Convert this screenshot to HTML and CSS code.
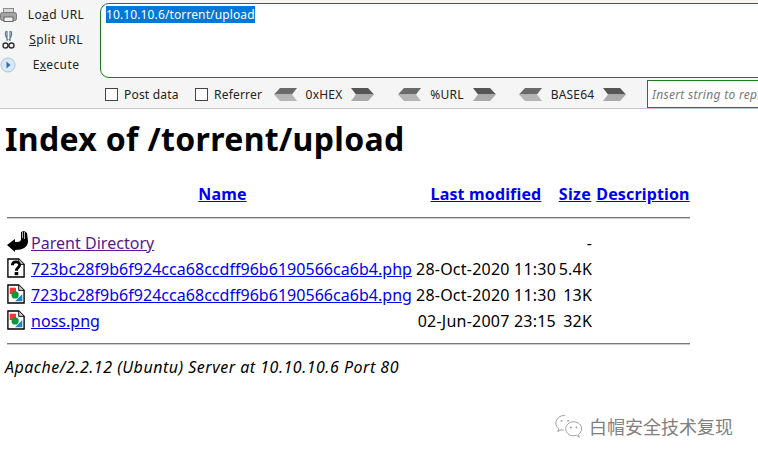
FILE: index.html
```html
<!DOCTYPE html>
<html lang="en">
<head>
    <meta charset="UTF-8">
    <title>Index of /torrent/upload</title>
    <link rel="stylesheet" href="styles.css">
</head>
<body>
    <div class="hackbar">
        <div class="actions">
            <div class="action">
                <svg class="action-icon" width="17" height="16" viewBox="0 0 17 16"><rect x="3.500" y="1.500" width="10" height="5" fill="#d8d8d8" stroke="#8a8a8a"/><rect x="0.500" y="5.500" width="16" height="8" rx="2" fill="#a4a4a4" stroke="#777"/><rect x="4" y="10" width="9" height="4.500" fill="#eee" stroke="#666"/></svg>
                <span class="action-label">Lo<u>a</u>d URL</span>
            </div>
            <div class="action">
                <svg class="action-icon" width="17" height="20" viewBox="0 0 17 20"><path d="M7 1v10M10 1v10M6 1q-2 4 2 9M11 1q2 4-2 9" fill="none" stroke="#5f7f9f" stroke-width="1.2"/><circle cx="5.500" cy="15.500" r="2.500" fill="none" stroke="#333" stroke-width="1.400"/><circle cx="11.500" cy="15.500" r="2.500" fill="none" stroke="#333" stroke-width="1.400"/></svg>
                <span class="action-label"><u>S</u>plit URL</span>
            </div>
            <div class="action">
                <svg class="action-icon" width="17" height="16" viewBox="0 0 17 16"><circle cx="8" cy="8" r="7" fill="#dbe8f8" stroke="#a9c3e2"/><path d="M6.500 4.500 10.500 8l-4 3.500z" fill="#2f6db5"/></svg>
                <span class="action-label">E<u>x</u>ecute</span>
            </div>
        </div>
        <div class="editor">
            <div class="url-box"><span class="selected">10.10.10.6/torrent/upload</span></div>
            <div class="options">
                <label class="check check-post"><span class="box"></span>Post data</label>
                <label class="check check-ref"><span class="box"></span>Referrer</label>
                <div class="codec codec-hex">
                    <svg class="arrow" width="23" height="13" viewBox="0 0 23 13"><path d="M0 6.500 6 0h17l-5 6.500z" fill="#6a6a6a"/><path d="M0 6.500h18l5 6.500H6z" fill="#b5b5b5"/></svg>
                    <span class="codec-name">0xHEX</span>
                    <svg class="arrow" width="23" height="13" viewBox="0 0 23 13"><path d="M0 0h17l6 6.500H5z" fill="#555"/><path d="M5 6.500h18L17 13H0z" fill="#aaa"/></svg>
                </div>
                <div class="codec codec-url">
                    <svg class="arrow" width="23" height="13" viewBox="0 0 23 13"><path d="M0 6.500 6 0h17l-5 6.500z" fill="#6a6a6a"/><path d="M0 6.500h18l5 6.500H6z" fill="#b5b5b5"/></svg>
                    <span class="codec-name">%URL</span>
                    <svg class="arrow" width="23" height="13" viewBox="0 0 23 13"><path d="M0 0h17l6 6.500H5z" fill="#555"/><path d="M5 6.500h18L17 13H0z" fill="#aaa"/></svg>
                </div>
                <div class="codec codec-b64">
                    <svg class="arrow" width="23" height="13" viewBox="0 0 23 13"><path d="M0 6.500 6 0h17l-5 6.500z" fill="#6a6a6a"/><path d="M0 6.500h18l5 6.500H6z" fill="#b5b5b5"/></svg>
                    <span class="codec-name">BASE64</span>
                    <svg class="arrow" width="23" height="13" viewBox="0 0 23 13"><path d="M0 0h17l6 6.500H5z" fill="#555"/><path d="M5 6.500h18L17 13H0z" fill="#aaa"/></svg>
                </div>
                <div class="replace">Insert string to replace</div>
            </div>
        </div>
    </div>

    <div class="page">
        <h1>Index of /torrent/upload</h1>
        <table>
            <tr class="head">
                <th class="icon-cell"></th>
                <th class="col-name"><a href="#">Name</a></th>
                <th class="col-date"><a href="#">Last modified</a></th>
                <th class="col-size"><a href="#">Size</a></th>
                <th class="col-desc"><a href="#">Description</a></th>
            </tr>
            <tr><th colspan="5" class="rule-cell"><hr class="rule-top"></th></tr>
            <tr>
                <td class="icon-cell">
                    <svg width="22" height="21" viewBox="0 0 22 21"><path d="M0 14 8 8v3c3 0 5 0 6-2V1l3-1 3 2 1 8c0 6-5 9-13 9v2z" fill="#000"/><path d="M15.500 1v6M17.500 1v7" stroke="#fff" stroke-width="0.700"/></svg>
                </td>
                <td><a class="visited" href="#">Parent Directory</a></td>
                <td></td>
                <td class="right">-</td>
                <td></td>
            </tr>
            <tr>
                <td class="icon-cell">
                    <svg class="file-icon" width="18" height="20" viewBox="0 0 20 22"><path d="M1 1h12l6 6v14H1z" fill="#fff" stroke="#000" stroke-width="1.500"/><path d="M13 1v6h6" fill="#ccc" stroke="#000"/><path d="M6 8c0-5 8-5 8-.5 0 3-3.500 3-3.500 6.500" fill="none" stroke="#000" stroke-width="3.200"/><rect x="8.500" y="15.500" width="4" height="3.500" fill="#000"/></svg>
                </td>
                <td><a href="#">723bc28f9b6f924cca68ccdff96b6190566ca6b4.php</a></td>
                <td class="right date">28-Oct-2020 11:30</td>
                <td class="right">5.4K</td>
                <td></td>
            </tr>
            <tr>
                <td class="icon-cell">
                    <svg class="file-icon" width="18" height="20" viewBox="0 0 20 22"><path d="M1 1h12l6 6v14H1z" fill="#fff" stroke="#000" stroke-width="1.500"/><path d="M13 1v6h6" fill="#ccc" stroke="#000"/><rect x="3" y="4" width="7" height="7" fill="#f33"/><path d="M9 19l8-8v8z" fill="#1c86c8"/><circle cx="9" cy="12" r="4" fill="#0a9a3a"/></svg>
                </td>
                <td><a href="#">723bc28f9b6f924cca68ccdff96b6190566ca6b4.png</a></td>
                <td class="right date">28-Oct-2020 11:30</td>
                <td class="right">13K</td>
                <td></td>
            </tr>
            <tr>
                <td class="icon-cell">
                    <svg class="file-icon" width="18" height="20" viewBox="0 0 20 22"><path d="M1 1h12l6 6v14H1z" fill="#fff" stroke="#000" stroke-width="1.500"/><path d="M13 1v6h6" fill="#ccc" stroke="#000"/><rect x="3" y="4" width="7" height="7" fill="#f33"/><path d="M9 19l8-8v8z" fill="#1c86c8"/><circle cx="9" cy="12" r="4" fill="#0a9a3a"/></svg>
                </td>
                <td><a href="#">noss.png</a></td>
                <td class="right date">02-Jun-2007 23:15</td>
                <td class="right">32K</td>
                <td></td>
            </tr>
            <tr><th colspan="5" class="rule-cell"><hr></th></tr>
        </table>
        <address>Apache/2.2.12 (Ubuntu) Server at 10.10.10.6 Port 80</address>
    </div>

    <div class="watermark">
        <svg width="28" height="26" viewBox="0 0 30 27"><path d="M11 2C5 2 1 6 1 10.500c0 2.500 1 4.500 3 6l-1 3 3.500-2c1 .3 2 .5 3 .5" fill="none" stroke="#999"/><path d="M20 9c-5 0-8.500 3.500-8.500 7.500S15 24 20 24c1 0 2-.2 3-.5l3 2-.8-3c2-1.500 3.300-3.500 3.300-6C28.500 12.500 25 9 20 9z" fill="none" stroke="#999"/><circle cx="7" cy="8" r="1" fill="#999"/><circle cx="14" cy="8" r="1" fill="#999"/><circle cx="17" cy="15" r="1" fill="#999"/><circle cx="23" cy="15" r="1" fill="#999"/></svg>
        <span>白帽安全技术复现</span>
    </div>
</body>
</html>
```

FILE: styles.css
```css
body {
    margin: 0;
    width: 758px;
    height: 461px;
    overflow: hidden;
    position: relative;
    background-color: white;
    font-family: "Noto Sans", "Noto Sans CJK SC", sans-serif;
    font-size: 16px;
    color: black;
}
.hackbar {
    display: flex;
    height: 108px;
    background-color: #f5f5f5;
    border-bottom: 1px solid #c8c8c8;
    font-size: 12px;
    color: #222;
}
.actions {
    width: 100px;
    flex-shrink: 0;
    padding-top: 2px;
}
.action {
    display: flex;
    align-items: center;
    height: 25px;
}
.action-icon {
    flex-shrink: 0;
}
.action-label {
    width: 72px;
    margin-left: 3px;
    text-align: center;
    letter-spacing: 0.4px;
}
.editor {
    flex: 1;
    min-width: 0;
    padding-top: 3px;
}
.url-box {
    height: 75px;
    box-sizing: border-box;
    margin-right: -12px;
    padding: 3px 5px;
    background-color: white;
    border: 1px solid #1e7b1e;
    border-radius: 9px 0 0 9px;
    line-height: 16px;
    letter-spacing: 0.12px;
}
.selected {
    background-color: #0078d7;
    color: white;
}
.options {
    display: flex;
    align-items: center;
    height: 28px;
    margin-top: 2px;
}
.check {
    display: flex;
    align-items: center;
    flex-shrink: 0;
    white-space: nowrap;
    letter-spacing: 0.2px;
}
.box {
    width: 11px;
    height: 11px;
    margin-right: 6px;
    background-color: white;
    border: 1px solid #444;
}
.check-post {
    width: 90px;
    margin-left: 5px;
}
.check-ref {
    width: 79px;
}
.codec {
    display: flex;
    align-items: center;
    flex-shrink: 0;
}
.arrow {
    flex-shrink: 0;
}
.codec-name {
    text-align: center;
    letter-spacing: 0.2px;
}
.codec-hex .codec-name {
    width: 54px;
}
.codec-url {
    margin-left: 24px;
}
.codec-url .codec-name {
    width: 52px;
}
.codec-b64 {
    margin-left: 23px;
}
.codec-b64 .codec-name {
    width: 61px;
}
.replace {
    flex-shrink: 0;
    height: 28px;
    width: 130px;
    box-sizing: border-box;
    margin-left: 21px;
    padding: 5px 4px;
    background-color: white;
    border: 1px solid #1e7b1e;
    color: #777;
    font-style: italic;
    letter-spacing: 0.3px;
    white-space: nowrap;
    overflow: hidden;
}
.page {
    padding: 0 5px;
}
h1 {
    margin: 8px 0 19px;
    font-size: 32px;
    line-height: 44px;
    letter-spacing: 0.33px;
}
table {
    table-layout: fixed;
    width: 687px;
    border-spacing: 2px;
}
th, td {
    padding: 0;
    height: 24px;
    line-height: 22px;
    white-space: nowrap;
}
th {
    letter-spacing: 0.15px;
}
a {
    color: #0000ee;
}
td a {
    letter-spacing: 0.03px;
}
a.visited {
    color: #551a8b;
}
.icon-cell {
    width: 22px;
    line-height: 0;
    vertical-align: top;
}
.file-icon {
    margin-top: 1px;
}
.col-name {
    width: 383px;
}
.col-date {
    width: 140px;
}
.col-size {
    width: 34px;
    padding-right: 2px;
    letter-spacing: 0.4px;
}
.col-desc {
    width: 94px;
}
.right {
    text-align: right;
    padding-right: 2px;
    letter-spacing: 0.2px;
}
.date {
    padding-right: 0;
    letter-spacing: 0.23px;
}
.rule-cell {
    height: auto;
    line-height: 0;
}
hr {
    margin: 8px 0;
    border: 0;
    border-top: 1px solid #777;
    border-bottom: 1px solid #ccc;
}
.rule-top {
    margin: 9px 0 10px;
}
address {
    margin-top: 1px;
    line-height: 22px;
    letter-spacing: 0.5px;
}
.watermark {
    position: absolute;
    left: 555px;
    top: 413px;
    display: flex;
    align-items: center;
    gap: 6px;
    color: #808080;
    font-size: 18px;
    white-space: nowrap;
}
```
